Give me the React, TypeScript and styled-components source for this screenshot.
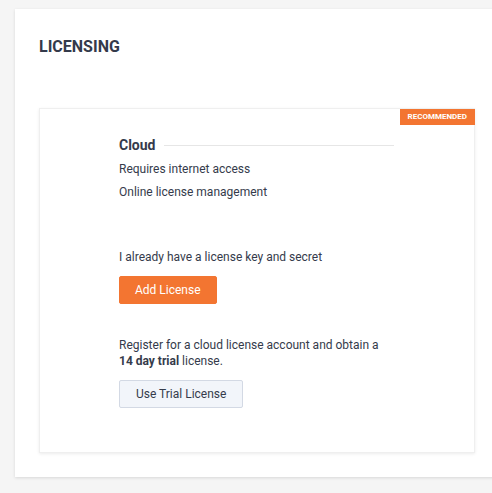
import React from "react";
import styled, { createGlobalStyle } from "styled-components";

const Global = createGlobalStyle`
  html, body { margin: 0; padding: 0; overflow: hidden; background: #f5f5f5; }
  body { font-family: Roboto, "Liberation Sans", sans-serif; color: #353b4b; }
  * { box-sizing: border-box; }
`;

const Page = styled.div`
  width: 492px;
  height: 493px;
  padding: 9px 0 0 15px;
`;

const Panel = styled.section`
  width: 484px;
  background: #fff;
  box-shadow: 0 1px 3px rgba(0, 0, 0, 0.12);
  padding: 28px 24px 24px 24px;
`;

const Title = styled.h1`
  margin: 0;
  font-size: 16px;
  line-height: 19px;
  font-weight: 700;
  color: #343a4b;
`;

const Card = styled.div`
  position: relative;
  margin-top: 52px;
  background: #fff;
  border: 1px solid #efefef;
  box-shadow: 0 1px 3px rgba(0, 0, 0, 0.08);
  padding: 26px 80px 44px 79px;
`;

const Badge = styled.div`
  position: absolute;
  top: 0;
  right: -1px;
  height: 16px;
  padding: 0 8px;
  background: #f37531;
  color: #fff;
  font-size: 8px;
  font-weight: 700;
  line-height: 16px;
`;

const HeadRow = styled.div`
  display: flex;
  align-items: center;
  gap: 8px;
  height: 20px;
`;

const Heading = styled.div`
  font-size: 14px;
  font-weight: 700;
  line-height: 20px;
  color: #343a4b;
`;

const Rule = styled.div`
  flex: 1;
  height: 1px;
  background: #e6e6e6;
`;

const Feature = styled.div<{ $first?: boolean }>`
  font-size: 12px;
  line-height: 23px;
  margin-top: ${(p) => (p.$first ? "3px" : "0")};
`;

const Text = styled.p<{ $top: number }>`
  margin: ${(p) => p.$top}px 0 0 0;
  font-size: 12px;
  line-height: 16px;
`;

const Button = styled.button<{ $primary?: boolean }>`
  display: block;
  margin-top: 11px;
  height: 28px;
  padding: 0 ${(p) => (p.$primary ? "15px" : "16px")};
  border-radius: 2px;
  font-family: Roboto, "Liberation Sans", sans-serif;
  font-size: 12px;
  cursor: pointer;
  background: ${(p) => (p.$primary ? "#f37531" : "#f2f5fa")};
  color: ${(p) => (p.$primary ? "#fff" : "#353b4b")};
  border: 1px solid ${(p) => (p.$primary ? "#f37531" : "#d3d9e4")};
`;

export default function App() {
  return (
    <>
      <Global />
      <Page>
        <Panel>
          <Title>LICENSING</Title>
          <Card>
            <Badge>RECOMMENDED</Badge>
            <HeadRow>
              <Heading>Cloud</Heading>
              <Rule />
            </HeadRow>
            <Feature $first>Requires internet access</Feature>
            <Feature>Online license management</Feature>
            <Text $top={45}>I already have a license key and secret</Text>
            <Button $primary>Add License</Button>
            <Text $top={33}>
              Register for a cloud license account and obtain a <b>14 day trial</b> license.
            </Text>
            <Button>Use Trial License</Button>
          </Card>
        </Panel>
      </Page>
    </>
  );
}
